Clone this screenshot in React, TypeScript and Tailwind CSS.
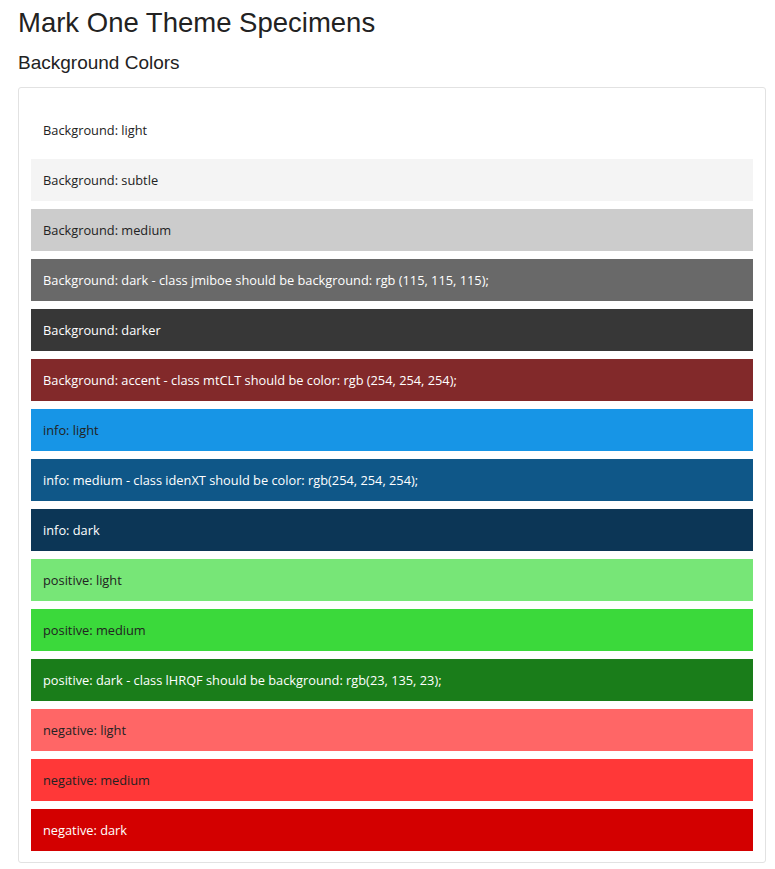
import React from "react";

interface Swatch {
  label: string;
  bg: string;
  text: string;
}

const swatches: Swatch[] = [
  { label: "Background: light", bg: "bg-white", text: "text-[#222]" },
  { label: "Background: subtle", bg: "bg-[#f4f4f4]", text: "text-[#222]" },
  { label: "Background: medium", bg: "bg-[#cccccc]", text: "text-[#222]" },
  {
    label: "Background: dark - class jmiboe should be background: rgb (115, 115, 115);",
    bg: "bg-[#696969]",
    text: "text-white",
  },
  { label: "Background: darker", bg: "bg-[#373737]", text: "text-white" },
  {
    label: "Background: accent - class mtCLT should be color: rgb (254, 254, 254);",
    bg: "bg-[#82292a]",
    text: "text-white",
  },
  { label: "info: light", bg: "bg-[#1795e6]", text: "text-[#222]" },
  {
    label: "info: medium - class idenXT should be color: rgb(254, 254, 254);",
    bg: "bg-[#0f5788]",
    text: "text-white",
  },
  { label: "info: dark", bg: "bg-[#0c3656]", text: "text-white" },
  { label: "positive: light", bg: "bg-[#77e677]", text: "text-[#222]" },
  { label: "positive: medium", bg: "bg-[#3bd93b]", text: "text-[#222]" },
  {
    label: "positive: dark - class lHRQF should be background: rgb(23, 135, 23);",
    bg: "bg-[#1a7d1a]",
    text: "text-white",
  },
  { label: "negative: light", bg: "bg-[#ff6666]", text: "text-[#222]" },
  { label: "negative: medium", bg: "bg-[#ff3838]", text: "text-[#222]" },
  { label: "negative: dark", bg: "bg-[#d30000]", text: "text-white" },
];

const App: React.FC = () => {
  return (
    <div className="bg-white min-h-[869px] px-[18px] pt-[5px] text-[#333] font-['Liberation_Sans',Arial,sans-serif]">
      <h1 className="text-[27.5px] leading-[36px] font-normal text-[#222]">
        Mark One Theme Specimens
      </h1>
      <h2 className="mt-[10px] text-[19px] leading-[24px] font-normal text-[#222]">
        Background Colors
      </h2>

      <div className="mt-[12px] w-[748px] border border-[#e2e2e2] rounded-[3px] px-[12px] pt-[21px] pb-[11px] flex flex-col gap-[8px]">
        {swatches.map((s) => (
          <div
            key={s.label}
            className={`h-[42px] flex items-center px-[12px] pt-[1px] text-[12.8px] font-['Open_Sans',sans-serif] ${s.bg} ${s.text}`}
          >
            {s.label}
          </div>
        ))}
      </div>
    </div>
  );
};

export default App;
